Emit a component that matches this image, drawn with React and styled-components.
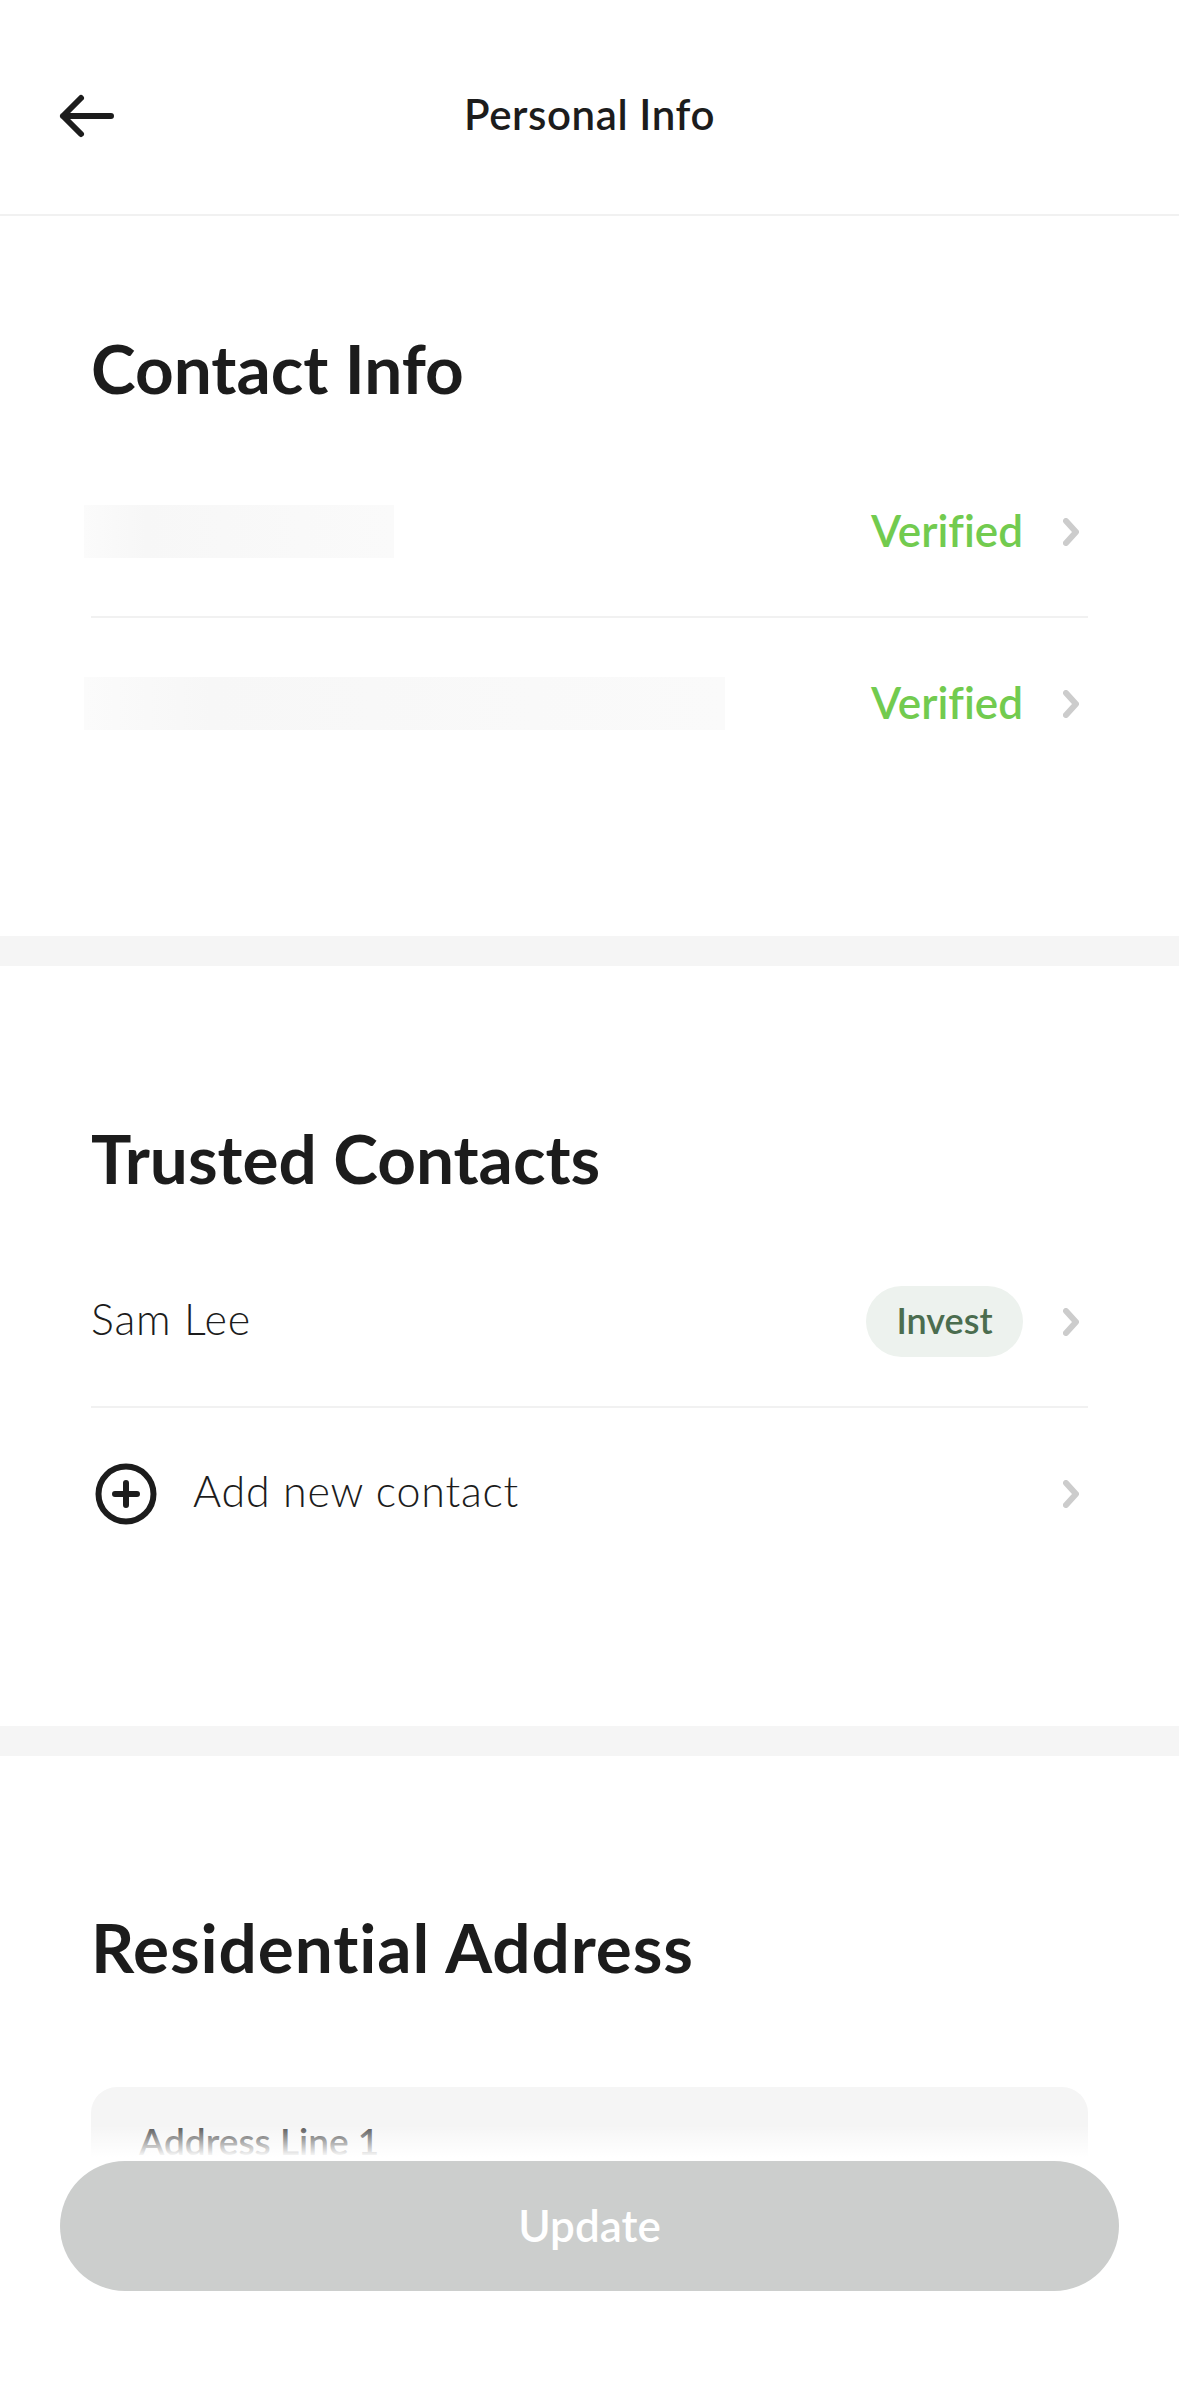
import React from 'react'
import styled, { createGlobalStyle } from 'styled-components'

const GlobalStyle = createGlobalStyle`
    html, body {
        margin: 0;
        padding: 0;
        background: #fff;
    }
    body {
        font-family: 'Lato', 'Open Sans', sans-serif;
        font-variant-ligatures: none;
        color: #1c1c1c;
    }
`

const Page = styled.div`
    position: relative;
    width: 1179px;
    height: 2396px;
    overflow: hidden;
    background: #fff;
`

const TopBar = styled.header`
    position: relative;
    height: 201px;
    display: flex;
    align-items: center;
    justify-content: center;
    padding-top: 13px;
    border-bottom: 2px solid #f1f1f1;
`

const BackButton = styled.button`
    position: absolute;
    left: 57px;
    top: 92px;
    width: 60px;
    height: 48px;
    padding: 0;
    border: 0;
    background: none;
    color: #1c1c1c;
`

const Title = styled.h1`
    margin: 0;
    font-size: 42px;
    font-weight: 600;
    line-height: 56px;
    letter-spacing: 0.6px;
`

const Section = styled.section`
    padding: ${({ $top }) => $top}px 91px 147px;
`

const Heading = styled.h2`
    margin: 0 0 39px;
    font-size: 67.5px;
    font-weight: 700;
    line-height: 80px;
    letter-spacing: ${({ $spacing }) => $spacing || 0}px;
`

const Band = styled.div`
    height: 30px;
    background: #f5f5f5;
`

const Row = styled.div`
    display: flex;
    align-items: center;
    height: 171px;
    padding-right: 9px;
    box-sizing: border-box;
    border-bottom: ${({ $divided }) => ($divided ? '2px solid #f1f1f1' : '0')};
`

const Redacted = styled.div`
    width: ${({ $width }) => $width}px;
    height: 53px;
    margin-left: -7px;
    background: linear-gradient(90deg, #fbfbfb 0%, #f7f7f7 20%, #f9f9f9 70%, #fafafa 100%);
`

const Name = styled.span`
    padding-bottom: 5px;
    font-size: 43px;
    font-weight: 300;
    line-height: 56px;
    color: #1c1c1c;
    letter-spacing: 0.8px;
`

const AddIcon = styled.svg`
    width: 62px;
    height: 62px;
    margin: 0 36px 0 4px;
    flex: none;
`

const Right = styled.div`
    margin-left: auto;
    display: flex;
    align-items: center;
    gap: 40px;
`

const Verified = styled.span`
    padding-bottom: 4px;
    font-size: 44px;
    font-weight: 600;
    line-height: 56px;
    color: #72cb4f;
`

const Pill = styled.span`
    display: flex;
    align-items: center;
    justify-content: center;
    width: 157px;
    height: 71px;
    padding-bottom: 3px;
    box-sizing: border-box;
    border-radius: 36px;
    background: #edf2ee;
    color: #4b6d4f;
    font-size: 36px;
    font-weight: 600;
`

const Chevron = styled.svg`
    width: 16px;
    height: 28px;
    flex: none;
    color: #cccccc;
`

const AddressCard = styled.div`
    margin-top: 100px;
    height: 200px;
    padding: 31px 48px;
    box-sizing: border-box;
    border-radius: 26px;
    background: #f5f5f5;
`

const FieldLabel = styled.div`
    font-size: 37px;
    font-weight: 600;
    line-height: 46px;
    color: #4f4f4f;
`

const Footer = styled.div`
    position: absolute;
    left: 0;
    right: 0;
    bottom: 0;
    height: 271px;
    padding: 36px 60px 0;
    box-sizing: border-box;
    background: linear-gradient(180deg, rgba(255, 255, 255, 0) 0, #fff 32px);
`

const UpdateButton = styled.button`
    display: block;
    width: 100%;
    height: 130px;
    padding: 0 0 3px;
    border: 0;
    border-radius: 65px;
    background: #cccecd;
    color: #fff;
    font-family: inherit;
    font-size: 44px;
    font-weight: 600;
`

const RowChevron = () => (
    <Chevron viewBox="0 0 16 28" fill="none">
        <path
            d="M3 3L13 14L3 25"
            stroke="currentColor"
            strokeWidth="6"
            strokeLinecap="round"
            strokeLinejoin="round"
        />
    </Chevron>
)

const App = () => {
    return (
        <Page>
            <GlobalStyle />
            <TopBar>
                <BackButton aria-label="Back">
                    <svg width="60" height="48" viewBox="0 0 60 48" fill="none">
                        <path
                            d="M6 24H54M24 6L6 24L24 42"
                            stroke="currentColor"
                            strokeWidth="6"
                            strokeLinecap="round"
                            strokeLinejoin="round"
                        />
                    </svg>
                </BackButton>
                <Title>Personal Info</Title>
            </TopBar>

            <Section $top={112}>
                <Heading>Contact Info</Heading>
                <Row $divided>
                    <Redacted $width={310} />
                    <Right>
                        <Verified>Verified</Verified>
                        <RowChevron />
                    </Right>
                </Row>
                <Row>
                    <Redacted $width={641} />
                    <Right>
                        <Verified>Verified</Verified>
                        <RowChevron />
                    </Right>
                </Row>
            </Section>
            <Band />

            <Section $top={152}>
                <Heading>Trusted Contacts</Heading>
                <Row $divided>
                    <Name>Sam Lee</Name>
                    <Right>
                        <Pill>Invest</Pill>
                        <RowChevron />
                    </Right>
                </Row>
                <Row>
                    <AddIcon viewBox="0 0 62 62" fill="none">
                        <circle cx="31" cy="31" r="27.5" stroke="#1c1c1c" strokeWidth="6" />
                        <path
                            d="M20 31H42M31 20V42"
                            stroke="#1c1c1c"
                            strokeWidth="6"
                            strokeLinecap="round"
                        />
                    </AddIcon>
                    <Name>Add new contact</Name>
                    <Right>
                        <RowChevron />
                    </Right>
                </Row>
            </Section>
            <Band />

            <Section $top={151}>
                <Heading $spacing={0.9}>Residential Address</Heading>
                <AddressCard>
                    <FieldLabel>Address Line 1</FieldLabel>
                </AddressCard>
            </Section>

            <Footer>
                <UpdateButton>Update</UpdateButton>
            </Footer>
        </Page>
    )
}

export default App
